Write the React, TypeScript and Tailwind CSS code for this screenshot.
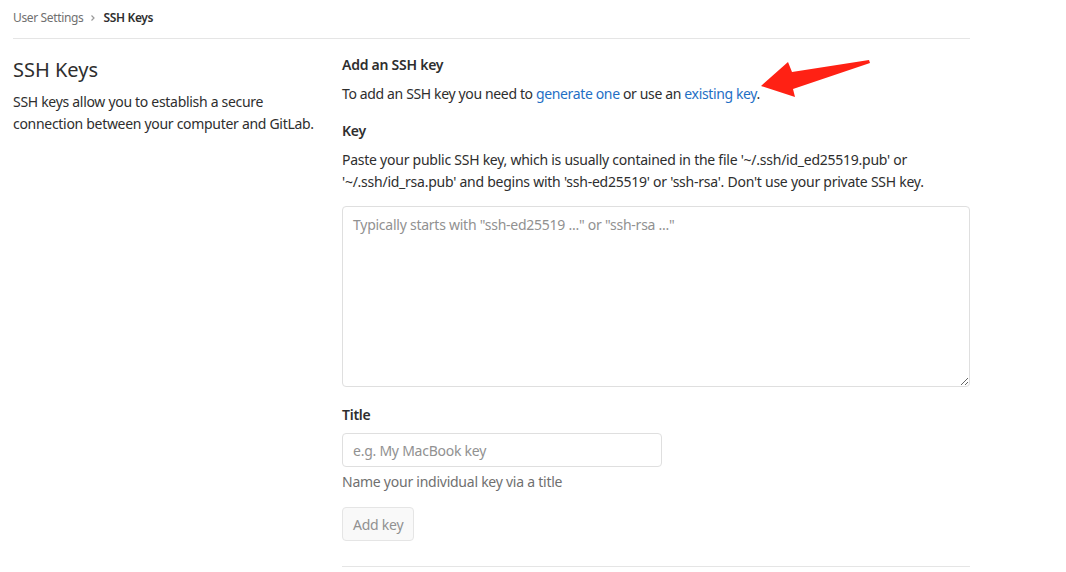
import React from "react";

export default function App() {
  return (
    <div
      className="relative w-[1066px] h-[572px] overflow-hidden bg-white text-[#2e2e2e] tracking-[-0.25px]"
      style={{ fontFamily: '"Noto Sans", "Open Sans", sans-serif' }}
    >
      <div className="w-[957px] ml-[13px]">
        <div className="flex items-center h-[39px] border-b border-[#e5e5e5] text-[12px] pb-[3px] tracking-[-0.35px]">
          <span className="text-[#707070]">User Settings</span>
          <svg className="mx-[6px]" width="8" height="8" viewBox="0 0 8 8">
            <path d="M2.5 1.5 L5 4 L2.5 6.5" stroke="#999" strokeWidth="1.2" fill="none" />
          </svg>
          <span className="font-semibold text-[#2e2e2e]">SSH Keys</span>
        </div>

        <div className="flex pt-[16px]">
          <div className="w-[329px] shrink-0">
            <h4 className="text-[20px] leading-[28px] mt-[1px] mb-[7px] tracking-normal">SSH Keys</h4>
            <p className="w-[312px] text-[14px] leading-[22px] tracking-[-0.3px]">
              SSH keys allow you to establish a secure connection between your computer and GitLab.
            </p>
          </div>
          <div className="flex-1 text-[14px]">
            <h5 className="font-semibold leading-[20px] mb-[9px]">Add an SSH key</h5>
            <p className="leading-[20px] mb-[17px] tracking-[-0.36px]">
              To add an SSH key you need to{" "}
              <a className="text-[#1f6fc5]">generate one</a> or use an{" "}
              <a className="text-[#1f6fc5]">existing key</a>.
            </p>
            <div className="font-semibold leading-[20px] mb-[8px]">Key</div>
            <p className="leading-[22px] mb-[13px]">
              Paste your public SSH key, which is usually contained in the file '~/.ssh/id_ed25519.pub' or '~/.ssh/id_rsa.pub' and begins with 'ssh-ed25519' or 'ssh-rsa'. Don't use your private SSH key.
            </p>
            <textarea
              className="block w-full h-[181px] border border-[#dfdfdf] rounded-[4px] px-[10px] py-[7px] text-[14px] placeholder:text-[#919191] outline-none"
              placeholder={'Typically starts with "ssh-ed25519 ..." or "ssh-rsa ..."'}
            />
            <div className="font-semibold leading-[20px] mt-[18px] mb-[8px]">Title</div>
            <input
              className="block w-[320px] h-[34px] border border-[#dfdfdf] rounded-[4px] px-[10px] text-[14px] placeholder:text-[#919191] outline-none"
              placeholder="e.g. My MacBook key"
            />
            <div className="text-[#707070] leading-[20px] mt-[5px]">Name your individual key via a title</div>
            <button className="mt-[15px] h-[34px] px-[10px] border border-[#e5e5e5] rounded-[4px] bg-[#f9f9f9] text-[#919191] text-[14px]">
              Add key
            </button>
            <div className="mt-[25px] border-t border-[#e5e5e5]" />
          </div>
        </div>
      </div>

      <svg className="absolute left-[755px] top-[55px]" width="120" height="50" viewBox="755 55 120 50">
        <polygon
          points="761,86 788,62 792,72 869,60 870,63 793,89 795,97"
          fill="#ff2114"
        />
      </svg>
    </div>
  );
}
